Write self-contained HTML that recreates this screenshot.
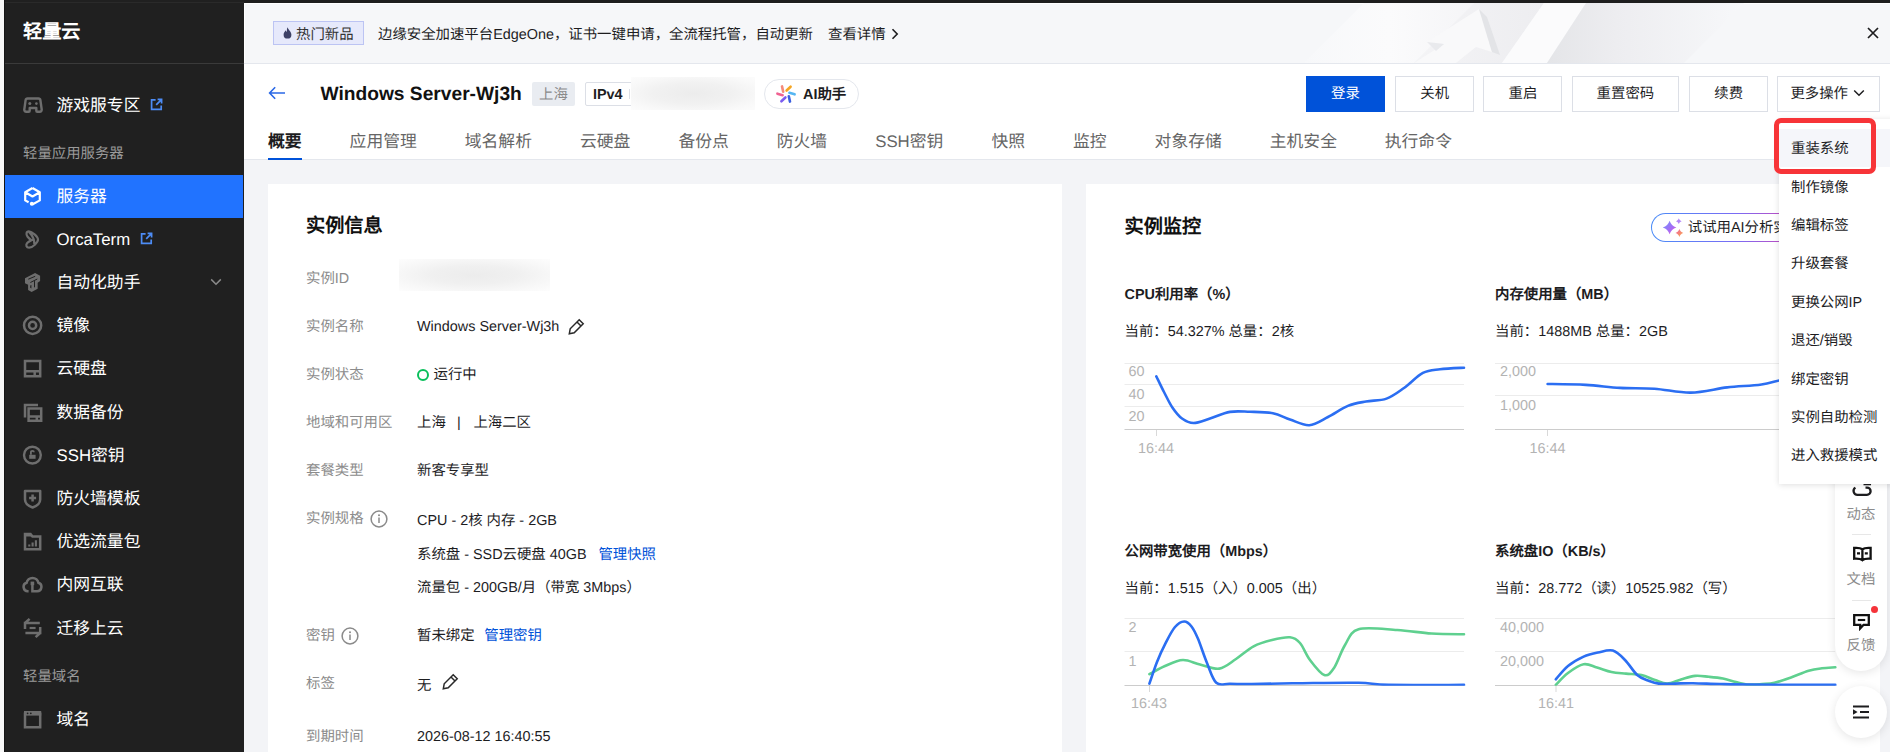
<!DOCTYPE html>
<html lang="zh-CN">
<head>
<meta charset="utf-8">
<title>轻量云</title>
<style>
*{box-sizing:border-box;margin:0;padding:0}
html,body{width:1890px;height:752px;overflow:hidden;background:#f3f4f7}
body{text-rendering:geometricPrecision;font-family:"Liberation Sans",sans-serif;color:#1d1d1f;position:relative;font-size:14px}
.abs{position:absolute}
.t{position:absolute;white-space:nowrap;line-height:1;padding-top:1.2px}
/* sidebar */
#strip{left:0;top:0;width:4px;height:752px;background:#f7f7f7;border-right:0.6px solid #151515;width:4.6px}
#topbar{left:244px;top:0;width:1646px;height:3px;background:#1e1e1e}
#side{left:4px;top:0;width:240px;height:752px;background:#202020}
#side .logo{left:19px;top:22px;font-size:19.2px;font-weight:bold;color:#fff}
#side .sep{left:0;top:63px;width:240px;height:1px;background:#3a3a3a}
#side .mi{left:52.5px;font-size:16.8px;color:#fff}
#side .lbl{left:19px;font-size:14.4px;color:#9a9a9a}
#side .act{left:0;top:175px;width:239px;height:43px;background:#2173ff}
#side svg{position:absolute}
/* banner */
#banner{left:244px;top:3px;width:1646px;height:61px;background:#f6f7f9;border-bottom:1px solid #e4e7ed;box-shadow:inset 1px 1px 0 #fff}
/* title area */
#head{left:244px;top:64px;width:1646px;height:96px;background:#fff;border-bottom:1px solid #e4e7ed}
.tab{font-size:17px;color:#666;top:133px}
.btn{position:absolute;top:12px;height:36px;border:1px solid #dcdfe6;background:#fff;font-size:14px;color:#1d1d1f;text-align:center;line-height:34px;white-space:nowrap;font-size:14.4px}
.panel{position:absolute;background:#fff;top:184px;height:568px}
.k{font-size:14.4px;color:#8c8c8c}
.v{font-size:14.4px;color:#1d1d1f}
.lnk{color:#0052d9}
.ct{font-size:14.4px;font-weight:bold;color:#1d1d1f}
.cs{font-size:14.4px;color:#1d1d1f}
.ax{font-size:14.4px;color:#b3b3b3}
.dd{left:1791px;font-size:14.4px;color:#1d1d1f}
</style>
</head>
<body>
<div id="side" class="abs">
  <div class="t logo">轻量云</div>
  <div class="abs sep"></div>
  <div class="abs" style="left:0;top:2px;width:240px;height:1px;background:#2a2a2a"></div>
  <div class="abs act"></div>
  <div class="t mi" style="top:82.4px;height:43.2px;line-height:43.2px">游戏服专区</div>
  <div class="t mi" style="top:173.4px;height:43.2px;line-height:43.2px">服务器</div>
  <div class="t mi" style="top:216.6px;height:43.2px;line-height:43.2px">OrcaTerm</div>
  <div class="t mi" style="top:259.8px;height:43.2px;line-height:43.2px">自动化助手</div>
  <div class="t mi" style="top:303.0px;height:43.2px;line-height:43.2px">镜像</div>
  <div class="t mi" style="top:346.2px;height:43.2px;line-height:43.2px">云硬盘</div>
  <div class="t mi" style="top:389.4px;height:43.2px;line-height:43.2px">数据备份</div>
  <div class="t mi" style="top:432.6px;height:43.2px;line-height:43.2px">SSH密钥</div>
  <div class="t mi" style="top:475.8px;height:43.2px;line-height:43.2px">防火墙模板</div>
  <div class="t mi" style="top:519.0px;height:43.2px;line-height:43.2px">优选流量包</div>
  <div class="t mi" style="top:562.2px;height:43.2px;line-height:43.2px">内网互联</div>
  <div class="t mi" style="top:605.4px;height:43.2px;line-height:43.2px">迁移上云</div>
  <div class="t mi" style="top:696.4px;height:43.2px;line-height:43.2px">域名</div>
  <div class="t lbl" style="top:131.4px;height:43.2px;line-height:43.2px">轻量应用服务器</div>
  <div class="t lbl" style="top:654.4px;height:43.2px;line-height:43.2px">轻量域名</div>
  <svg style="left:19.0px;top:96.5px" width="20" height="17" viewBox="0 0 20 17"><path d="M4.600 1.500h10.800a2 2 0 0 1 2 1.700l1.300 9.300a2 2 0 0 1-2 2.300h-2.400a1 1 0 0 1-1-1v-2.800H6.700v2.800a1 1 0 0 1-1 1H3.300a2 2 0 0 1-2-2.300l1.300-9.300a2 2 0 0 1 2-1.700z" fill="none" stroke="#6e6e6e" stroke-width="2.400" stroke-linejoin="round"/><circle cx="6.800" cy="6.600" r="1.500" fill="#6e6e6e"/><circle cx="13.400" cy="6.600" r="1.300" fill="#6e6e6e"/></svg>
  <svg style="left:19.0px;top:186.0px" width="19" height="21" viewBox="0 0 19 21"><path d="M9.500 2L16.800 6.200V14.400L9.300 18.500M9.500 2L2.200 6.200V14.400L5.600 16.300M2.200 6.200L9.500 10.500L16.800 6.200" fill="none" stroke="#fff" stroke-width="2.200" stroke-linejoin="round"/><circle cx="8.800" cy="17.800" r="2" fill="#fff"/></svg>
  <svg style="left:20.0px;top:229.0px" width="17" height="21" viewBox="0 0 17 21"><path d="M4.800 2.300C8 2.500 14 7.500 14 10.600C14 13.500 8.500 18.700 5.200 18.700C2.200 18.700 1.600 15.800 3.200 14C4.600 12.500 6.400 11.800 7.600 11.200C6.400 10.600 5 9.600 3.600 7.800C1.800 5.500 2.200 2.300 4.800 2.300ZM5.400 3.400C7.200 5.200 9 8 9.600 10C10 11.500 10.400 12.600 10.200 14.400M7.600 11.200C8.500 11 9.400 10.600 9.600 10" fill="none" stroke="#6e6e6e" stroke-width="2.200" stroke-linecap="round" stroke-linejoin="round"/></svg>
  <svg style="left:20.0px;top:272.0px" width="18" height="21" viewBox="0 0 18 21"><path d="M1 6.200L11.050 1L16.100 3.750V9.100L13.650 10.700V16.700L7.600 20L4.100 18.100V12.700L1 11.200z" fill="#6e6e6e"/><path d="M4.300 7.200L11.200 4.300M6.400 10.500L13.300 7M10.500 9.100V15.300" stroke="#202020" stroke-width="1"/><path d="M6.200 13.600L7.400 13.100V16.400L6.200 15.800z" fill="#202020"/></svg>
  <svg style="left:18.0px;top:315.0px" width="21" height="21" viewBox="0 0 21 21"><circle cx="10.600" cy="10.400" r="8.600" fill="none" stroke="#6e6e6e" stroke-width="2.500"/><circle cx="10.600" cy="10.400" r="3.600" fill="none" stroke="#6e6e6e" stroke-width="2.500"/></svg>
  <svg style="left:19.0px;top:359.0px" width="19" height="19" viewBox="0 0 19 19"><path d="M2 2h15.200v15.200H2zM2 12.200h15.200M11.700 12.200v5" fill="none" stroke="#6e6e6e" stroke-width="2.500"/></svg>
  <svg style="left:18.5px;top:402.5px" width="20" height="20" viewBox="0 0 20 20"><path d="M2 14.500V2h13" fill="none" stroke="#6e6e6e" stroke-width="2.500"/><path d="M5.600 5.600h12.600v12.200H5.600zM5.600 13.400h12.600M13.800 13.400v4.400" fill="none" stroke="#6e6e6e" stroke-width="2.500"/></svg>
  <svg style="left:18.0px;top:444.8px" width="21" height="21" viewBox="0 0 21 21"><circle cx="10.400" cy="10.100" r="8.400" fill="none" stroke="#6e6e6e" stroke-width="2.400"/><path d="M7.200 9.800h6.400v4H7.200z" fill="#6e6e6e"/><path d="M8.900 9.800V7.300a1.500 1.500 0 0 1 3 0" fill="none" stroke="#6e6e6e" stroke-width="1.800"/></svg>
  <svg style="left:19.0px;top:489.0px" width="19" height="20" viewBox="0 0 19 20"><path d="M2 2h15.200v8.500c0 4-3.500 6.500-7.600 8-4.100-1.500-7.600-4-7.600-8z" fill="none" stroke="#6e6e6e" stroke-width="2.500" stroke-linejoin="round"/><path d="M9.600 5.400v7M6.100 8.900h7" stroke="#6e6e6e" stroke-width="2.500"/></svg>
  <svg style="left:19.0px;top:532.0px" width="19" height="19" viewBox="0 0 19 19"><path d="M2 2h5.500l2 2.600h7.700v12.600H2z" fill="none" stroke="#6e6e6e" stroke-width="2.500" stroke-linejoin="miter"/><path d="M2 2h5.500l2 2.600H2z" fill="#6e6e6e"/><path d="M6.300 14.400v-2M9.600 14.400v-4M12.900 14.400v-6.200" stroke="#6e6e6e" stroke-width="2.100"/></svg>
  <svg style="left:18.0px;top:574.0px" width="21" height="20" viewBox="0 0 21 20"><path d="M6.600 17.200H5.800A4.300 4.300 0 0 1 4.600 8.800A6 6 0 0 1 16.400 8.800A4.300 4.300 0 0 1 15.200 17.200H10.400V10.400" fill="none" stroke="#6e6e6e" stroke-width="2.500" stroke-linecap="butt"/><path d="M8.600 7.600h3.600v3.600H8.600z" fill="#6e6e6e"/></svg>
  <svg style="left:19.0px;top:617.0px" width="19" height="22" viewBox="0 0 19 22"><path d="M2 12V6h14.800M2 6L6.600 1.800" fill="none" stroke="#6e6e6e" stroke-width="2.500"/><path d="M17.200 10v6H2.400M17.200 16L12.600 20.200" fill="none" stroke="#6e6e6e" stroke-width="2.500"/><path d="M6.600 11h6" stroke="#6e6e6e" stroke-width="2.200"/></svg>
  <svg style="left:19.0px;top:710.0px" width="19" height="19" viewBox="0 0 19 19"><path d="M2 3.800h15.200v13.400H2z" fill="none" stroke="#6e6e6e" stroke-width="2.500"/><path d="M1 1h17.200v4.600H1z" fill="#6e6e6e"/><circle cx="4.600" cy="3.300" r="0.900" fill="#202020"/><circle cx="7.800" cy="3.300" r="0.900" fill="#202020"/></svg>
  <svg style="left:145.5px;top:98.2px" width="13" height="13" viewBox="0 0 13 13"><path d="M5.600 1.800H1.600v9.600h9.600V7.400" fill="none" stroke="#4d8cf5" stroke-width="1.700"/><path d="M7.600 1.400h4v4M11.400 1.600L6.200 6.800" fill="none" stroke="#4d8cf5" stroke-width="1.700"/></svg>
  <svg style="left:135.5px;top:232.2px" width="13" height="13" viewBox="0 0 13 13"><path d="M5.600 1.800H1.600v9.600h9.600V7.400" fill="none" stroke="#4d8cf5" stroke-width="1.700"/><path d="M7.600 1.400h4v4M11.400 1.600L6.200 6.800" fill="none" stroke="#4d8cf5" stroke-width="1.700"/></svg>
  <svg style="left:205.5px;top:277.5px" width="12" height="8" viewBox="0 0 12 8"><path d="M1.200 1.400L6 6.200L10.800 1.400" fill="none" stroke="#8a8a8a" stroke-width="1.500"/></svg>
</div>
<div id="banner" class="abs">
  <svg class="abs" style="left:0;top:0" width="1646" height="60" viewBox="0 0 1646 60">
    <defs>
      <linearGradient id="bgA" x1="0" y1="0" x2="1" y2="0"><stop offset="0" stop-color="#e4e5e8"/><stop offset="0.35" stop-color="#ededf0"/><stop offset="1" stop-color="#f7f8fa"/></linearGradient>
      <linearGradient id="bgB" x1="0" y1="0" x2="1" y2="0"><stop offset="0" stop-color="#f7f8fa"/><stop offset="0.5" stop-color="#fbfbfc"/><stop offset="1" stop-color="#f5f5f7"/></linearGradient>
      <linearGradient id="bgC" x1="0" y1="0" x2="1" y2="0"><stop offset="0" stop-color="#f4f4f6"/><stop offset="1" stop-color="#ededf0"/></linearGradient>
    </defs>
    <polygon points="1060,60 1120,0 1230,0 1170,60" fill="url(#bgB)"/>
    <polygon points="1170,60 1230,0 1300,0 1258,60" fill="url(#bgC)"/>
    <polygon points="1300,0 1342,0 1303,60 1258,60" fill="#fbfbfc"/>
    <polygon points="1342,0 1500,0 1440,60 1303,60" fill="url(#bgA)"/>
    <polygon points="1235,6 1183,39 1200,41 1170,60 1212,60 1232,44 1248,49" fill="#f9f9fa"/>
    <polygon points="1235,6 1243,14 1256,52 1248,49" fill="#e3e4e7"/>
    <polygon points="1183,39 1200,41 1192,48" fill="#e9eaed"/>
  </svg>
  <div class="abs" style="left:29px;top:18px;width:91px;height:24px;background:#e6e9fb;border:1px solid #bcc4f3"></div>
  <svg class="abs" style="left:39px;top:24px" width="9" height="12" viewBox="0 0 9 12"><path d="M4.6 0.3C5 2.6 8.4 4.6 8.4 7.7a3.9 3.9 0 0 1-7.8 0C0.6 5.6 2 4.6 2.6 3.2c.5 1 .9 1.4 1.4 1.6C3.7 3.2 3.9 1.6 4.6 0.3z" fill="#3d4166"/></svg>
  <div class="t" style="left:52px;top:19px;height:24px;line-height:24px;font-size:14.4px;color:#333">热门新品</div>
  <div class="t" style="left:134px;top:19px;height:24px;line-height:24px;font-size:14.4px;color:#1d1d1f">边缘安全加速平台EdgeOne，证书一键申请，全流程托管，自动更新</div>
  <div class="t" style="left:584px;top:19px;height:24px;line-height:24px;font-size:14.4px;color:#1d1d1f">查看详情</div>
  <svg class="abs" style="left:647.2px;top:24.5px" width="8" height="12" viewBox="0 0 8 12"><path d="M1.5 1.2L6.2 6 1.5 10.8" fill="none" stroke="#1d1d1f" stroke-width="1.6"/></svg>
  <svg class="abs" style="left:1623px;top:24px" width="12" height="12" viewBox="0 0 12 12"><path d="M1 1L11 11M11 1L1 11" fill="none" stroke="#1d1d1f" stroke-width="1.7"/></svg>
</div>
<div id="head" class="abs">
  <svg class="abs" style="left:24px;top:22px" width="18" height="14" viewBox="0 0 18 14"><path d="M7.2 1.2L1.6 7l5.6 5.8M1.8 7H17" fill="none" stroke="#2a68e6" stroke-width="1.6"/></svg>
  <div class="t" style="left:76.5px;top:14.7px;height:30px;line-height:30px;font-size:19.2px;font-weight:bold;color:#111">Windows Server-Wj3h</div>
  <div class="t" style="left:288px;top:18px;width:43px;height:24px;line-height:24px;background:#e9ecf1;border-radius:2px;text-align:center;font-size:14.4px;color:#8a8a8a">上海</div>
  <div class="abs" style="left:341px;top:18px;width:170px;height:24px;border:1px solid #dcdfe6;border-radius:2px"></div>
  <div class="t" style="left:349px;top:18px;height:24px;line-height:25px;font-size:14.4px;font-weight:bold;color:#1d1d1f">IPv4</div>
  <div class="abs" style="left:385px;top:25px;width:1px;height:10px;background:#dcdfe6"></div>
  <div class="abs" style="left:386.5px;top:12.7px;width:124.7px;height:33.3px;background:radial-gradient(ellipse at 50% 50%,#ececec 0%,#f1f1f1 45%,#f9f9f9 80%,#fcfcfc 100%)"></div>
  <div class="abs" style="left:520px;top:15px;width:95px;height:30px;border:1px solid #e4e7ed;border-radius:15px;background:#fff"></div>
  <svg class="abs" style="left:530.7px;top:18.8px" width="22" height="22" viewBox="0 0 22 22"><path d="M11.6 7.5L15.6 3.7" stroke="#f5a623" stroke-width="2.600" stroke-linecap="round"/><path d="M14.4 9.8L19.6 11.3" stroke="#55b6f2" stroke-width="2.600" stroke-linecap="round"/><path d="M13.8 13.3L15.0 18.6" stroke="#3b5fe0" stroke-width="2.600" stroke-linecap="round"/><path d="M10.4 14.5L6.4 18.3" stroke="#7b5cf0" stroke-width="2.600" stroke-linecap="round"/><path d="M7.6 12.2L2.4 10.7" stroke="#f06292" stroke-width="2.600" stroke-linecap="round"/><path d="M8.2 8.7L7.0 3.4" stroke="#f58a7a" stroke-width="2.600" stroke-linecap="round"/></svg>
  <div class="t" style="left:559px;top:15px;height:30px;line-height:30px;font-size:14.4px;font-weight:bold;color:#1d1d1f">AI助手</div>
  <div class="btn" style="left:1062.0px;width:79px;background:#0052d9;border-color:#0052d9;color:#fff;">登录</div>
  <div class="btn" style="left:1151.2px;width:79px;">关机</div>
  <div class="btn" style="left:1239.4px;width:79px;">重启</div>
  <div class="btn" style="left:1328.0px;width:106.8px;">重置密码</div>
  <div class="btn" style="left:1445.2px;width:79px;">续费</div>
  <div class="btn" style="left:1533.4px;width:102.6px;text-align:left;padding-left:12px">更多操作</div>
  <svg class="abs" style="left:1609px;top:25px" width="12" height="8" viewBox="0 0 12 8"><path d="M1.2 1.5L6 6.2 10.8 1.5" fill="none" stroke="#1d1d1f" stroke-width="1.5"/></svg>
  <div class="t" style="left:24.0px;top:62px;height:30px;line-height:30px;font-size:16.8px;color:#1d1d1f;font-weight:bold">概要</div>
  <div class="t" style="left:105.6px;top:62px;height:30px;line-height:30px;font-size:16.8px;color:#666">应用管理</div>
  <div class="t" style="left:220.8px;top:62px;height:30px;line-height:30px;font-size:16.8px;color:#666">域名解析</div>
  <div class="t" style="left:336.0px;top:62px;height:30px;line-height:30px;font-size:16.8px;color:#666">云硬盘</div>
  <div class="t" style="left:434.4px;top:62px;height:30px;line-height:30px;font-size:16.8px;color:#666">备份点</div>
  <div class="t" style="left:532.8px;top:62px;height:30px;line-height:30px;font-size:16.8px;color:#666">防火墙</div>
  <div class="t" style="left:631.2px;top:62px;height:30px;line-height:30px;font-size:16.8px;color:#666">SSH密钥</div>
  <div class="t" style="left:747.4px;top:62px;height:30px;line-height:30px;font-size:16.8px;color:#666">快照</div>
  <div class="t" style="left:829.0px;top:62px;height:30px;line-height:30px;font-size:16.8px;color:#666">监控</div>
  <div class="t" style="left:910.6px;top:62px;height:30px;line-height:30px;font-size:16.8px;color:#666">对象存储</div>
  <div class="t" style="left:1025.8px;top:62px;height:30px;line-height:30px;font-size:16.8px;color:#666">主机安全</div>
  <div class="t" style="left:1140.8px;top:62px;height:30px;line-height:30px;font-size:16.8px;color:#666">执行命令</div>
  <div class="abs" style="left:24px;top:94px;width:34px;height:2px;background:#0052d9"></div>
</div>
<div id="strip" class="abs"></div>
<div id="topbar" class="abs"></div>
<div class="panel" style="left:268px;width:794px"></div>
<div class="panel" style="left:1086px;width:794px"></div>
<div id="pl">
<div class="t" style="left:306px;top:211px;height:30px;line-height:30px;font-size:19.2px;font-weight:bold;color:#111">实例信息</div>
<div class="t k" style="left:306px;top:266.0px;height:24px;line-height:24px;">实例ID</div>
<div class="t k" style="left:306px;top:314.2px;height:24px;line-height:24px;">实例名称</div>
<div class="t k" style="left:306px;top:362.0px;height:24px;line-height:24px;">实例状态</div>
<div class="t k" style="left:306px;top:409.8px;height:24px;line-height:24px;">地域和可用区</div>
<div class="t k" style="left:306px;top:457.6px;height:24px;line-height:24px;">套餐类型</div>
<div class="t k" style="left:306px;top:506.0px;height:24px;line-height:24px;">实例规格</div>
<div class="t k" style="left:306px;top:623.3px;height:24px;line-height:24px;">密钥</div>
<div class="t k" style="left:306px;top:670.6px;height:24px;line-height:24px;">标签</div>
<div class="t k" style="left:306px;top:724.0px;height:24px;line-height:24px;">到期时间</div>
<div class="abs" style="left:399px;top:259px;width:151px;height:32px;background:radial-gradient(ellipse at 50% 50%,#ececec 0%,#f0f0f0 40%,#f8f8f8 75%,#fdfdfd 100%)"></div>
<div class="t v" style="left:417px;top:314.2px;height:24px;line-height:24px;">Windows Server-Wj3h</div>
<svg class="abs" style="left:567.5px;top:318px" width="17" height="17" viewBox="0 0 17 17"><path d="M11.2 1.800l4 4L6.200 14.800L1.300 15.700L2.200 10.800zM9 4l4 4" fill="none" stroke="#2a2a2a" stroke-width="1.500" stroke-linejoin="miter"/></svg>
<div class="abs" style="left:417px;top:368.5px;width:12px;height:12px;border:2px solid #0abf5b;border-radius:50%"></div>
<div class="t v" style="left:433.5px;top:362.0px;height:24px;line-height:24px;">运行中</div>
<div class="t v" style="left:417px;top:409.8px;height:24px;line-height:24px;">上海</div>
<div class="t v" style="left:457px;top:409.8px;height:24px;line-height:24px;">|</div>
<div class="t v" style="left:473.4px;top:409.8px;height:24px;line-height:24px;">上海二区</div>
<div class="t v" style="left:417px;top:457.6px;height:24px;line-height:24px;">新客专享型</div>
<svg class="abs" style="left:369.5px;top:509.5px" width="18" height="18" viewBox="0 0 18 18"><circle cx="9" cy="9" r="7.9" fill="none" stroke="#8a8a8a" stroke-width="1.5"/><path d="M9 7.6v5.4" stroke="#8a8a8a" stroke-width="1.5"/><circle cx="9" cy="5.3" r="1" fill="#8a8a8a"/></svg>
<div class="t v" style="left:417px;top:507.8px;height:24px;line-height:24px;">CPU - 2核 内存 - 2GB</div>
<div class="t v" style="left:417px;top:542.0px;height:24px;line-height:24px;">系统盘 - SSD云硬盘 40GB</div>
<div class="t v lnk" style="left:598.4px;top:542.0px;height:24px;line-height:24px;">管理快照</div>
<div class="t v" style="left:417px;top:575.0px;height:24px;line-height:24px;">流量包 - 200GB/月（带宽 3Mbps）</div>
<svg class="abs" style="left:340.5px;top:627px" width="18" height="18" viewBox="0 0 18 18"><circle cx="9" cy="9" r="7.9" fill="none" stroke="#8a8a8a" stroke-width="1.5"/><path d="M9 7.6v5.4" stroke="#8a8a8a" stroke-width="1.5"/><circle cx="9" cy="5.3" r="1" fill="#8a8a8a"/></svg>
<div class="t v" style="left:417px;top:623.3px;height:24px;line-height:24px;">暂未绑定</div>
<div class="t v lnk" style="left:484.3px;top:623.3px;height:24px;line-height:24px;">管理密钥</div>
<div class="t v" style="left:417px;top:672.5px;height:24px;line-height:24px;">无</div>
<svg class="abs" style="left:442px;top:672.7px" width="17" height="17" viewBox="0 0 17 17"><path d="M11.2 1.800l4 4L6.200 14.800L1.300 15.700L2.200 10.800zM9 4l4 4" fill="none" stroke="#2a2a2a" stroke-width="1.500" stroke-linejoin="miter"/></svg>
<div class="t v" style="left:417px;top:724.0px;height:24px;line-height:24px;">2026-08-12 16:40:55</div>
</div>
<div id="pr">
<div class="t" style="left:1124.5px;top:211.5px;height:30px;line-height:30px;font-size:19.2px;font-weight:bold;color:#111">实例监控</div>
<div class="abs" style="left:1651px;top:212.6px;width:170px;height:29.4px;border-radius:14.7px;background:linear-gradient(90deg,#4a8cf7 0%,#7a6cf5 50%,#c04cc0 80%,#e05090 100%);"></div>
<div class="abs" style="left:1652.1px;top:213.7px;width:167.8px;height:27.2px;border-radius:13.6px;background:#fff"></div>
<svg class="abs" style="left:1660px;top:215px" width="26" height="25" viewBox="0 0 26 25"><defs><linearGradient id="sg1" x1="0" y1="0" x2="1" y2="1"><stop offset="0" stop-color="#6f95fb"/><stop offset="0.6" stop-color="#a76bf5"/><stop offset="1" stop-color="#e860c8"/></linearGradient><linearGradient id="sg2" x1="0" y1="0" x2="1" y2="1"><stop offset="0" stop-color="#f05aa8"/><stop offset="1" stop-color="#fbb040"/></linearGradient></defs><path d="M9.6 5.7C10.69 9.10 13.00 11.41 16.40 12.50C13.00 13.59 10.69 15.90 9.60 19.30C8.51 15.90 6.20 13.59 2.80 12.50C6.20 11.41 8.51 9.10 9.60 5.70Z" fill="url(#sg1)"/><path d="M18.8 3.3000000000000003C19.26 4.75 20.25 5.74 21.70 6.20C20.25 6.66 19.26 7.65 18.80 9.10C18.34 7.65 17.35 6.66 15.90 6.20C17.35 5.74 18.34 4.75 18.80 3.30Z" fill="#b487f8"/><path d="M19.4 14.1C20.02 16.05 21.35 17.38 23.30 18.00C21.35 18.62 20.02 19.95 19.40 21.90C18.78 19.95 17.45 18.62 15.50 18.00C17.45 17.38 18.78 16.05 19.40 14.10Z" fill="url(#sg2)"/></svg>
<div class="t cs" style="left:1687.8px;top:215.3px;height:24px;line-height:24px;">试试用AI分析实例</div>
<div class="t ct" style="left:1124.5px;top:282.0px;height:24px;line-height:24px;">CPU利用率（%）</div>
<div class="t cs" style="left:1124.5px;top:319.0px;height:24px;line-height:24px;">当前：54.327% 总量：2核</div>
<div class="t ct" style="left:1495px;top:282.0px;height:24px;line-height:24px;">内存使用量（MB）</div>
<div class="t cs" style="left:1495px;top:319.0px;height:24px;line-height:24px;">当前：1488MB 总量：2GB</div>
<div class="t ct" style="left:1124.5px;top:539.2px;height:24px;line-height:24px;">公网带宽使用（Mbps）</div>
<div class="t cs" style="left:1124.5px;top:576.0px;height:24px;line-height:24px;">当前：1.515（入）0.005（出）</div>
<div class="t ct" style="left:1495px;top:539.2px;height:24px;line-height:24px;">系统盘IO（KB/s）</div>
<div class="t cs" style="left:1495px;top:576.0px;height:24px;line-height:24px;">当前：28.772（读）10525.982（写）</div>
<svg class="abs" style="left:0;top:0" width="1890" height="752" viewBox="0 0 1890 752">
<defs><clipPath id="cpT"><rect x="1100" y="340" width="760" height="90"/></clipPath><clipPath id="cpB"><rect x="1100" y="600" width="760" height="85.800"/></clipPath></defs>
<path d="M1124.5 363.5H1464" stroke="#ececec" stroke-width="1"/>
<path d="M1124.5 384.5H1464" stroke="#ececec" stroke-width="1"/>
<path d="M1124.5 406.5H1464" stroke="#ececec" stroke-width="1"/>
<path d="M1124.5 429.5H1464" stroke="#cccccc" stroke-width="1.2"/>
<path d="M1156.5 430V436" stroke="#d9d9d9"/>
<path d="M1156.3 376.3C1157.6 378.9 1161.3 386.9 1164.0 392.0C1166.7 397.1 1169.2 402.8 1172.2 407.2C1175.2 411.6 1178.4 415.9 1182.0 418.5C1185.6 421.1 1188.9 423.0 1193.6 423.0C1198.3 423.0 1203.9 420.4 1210.0 418.5C1216.1 416.6 1223.3 413.0 1230.0 411.9C1236.7 410.8 1242.8 411.6 1250.0 411.8C1257.2 412.0 1266.2 411.9 1272.9 413.2C1279.6 414.5 1283.9 417.5 1290.0 419.5C1296.1 421.5 1303.0 425.6 1309.3 425.2C1315.6 424.8 1321.6 420.2 1328.0 417.0C1334.4 413.8 1341.6 408.5 1347.9 405.9C1354.2 403.3 1359.6 402.7 1366.0 401.5C1372.4 400.3 1380.2 400.9 1386.5 398.6C1392.8 396.4 1397.9 392.3 1404.0 388.0C1410.1 383.7 1416.9 376.0 1422.9 372.9C1428.9 369.8 1433.2 370.1 1440.0 369.2C1446.8 368.3 1460.0 367.9 1464.0 367.7" clip-path="url(#cpT)" fill="none" stroke="#2b6ef2" stroke-width="2.6" stroke-linecap="round"/>
<path d="M1495 363.5H1835" stroke="#ececec" stroke-width="1"/>
<path d="M1495 395.5H1835" stroke="#ececec" stroke-width="1"/>
<path d="M1495 429.5H1835" stroke="#cccccc" stroke-width="1.2"/>
<path d="M1547.5 430V436" stroke="#d9d9d9"/>
<path d="M1547.6 384.0C1554.0 384.1 1573.7 384.2 1585.8 384.9C1597.9 385.5 1608.6 387.3 1620.0 387.9C1631.4 388.5 1642.6 387.9 1654.4 388.7C1666.2 389.5 1678.7 392.8 1690.8 392.6C1702.9 392.4 1715.4 388.8 1727.2 387.4C1739.0 386.0 1751.0 386.0 1761.5 384.5C1772.0 383.0 1777.8 379.8 1790.0 378.5C1802.2 377.2 1827.5 377.2 1835.0 377.0" clip-path="url(#cpT)" fill="none" stroke="#2b6ef2" stroke-width="2.6" stroke-linecap="round"/>
<path d="M1124.5 618.5H1464" stroke="#ececec" stroke-width="1"/>
<path d="M1124.5 651.5H1464" stroke="#ececec" stroke-width="1"/>
<path d="M1124.5 685.5H1464" stroke="#cccccc" stroke-width="1.2"/>
<path d="M1149.5 686V692" stroke="#d9d9d9"/>
<path d="M1149.4 674.2C1152.0 672.8 1159.4 668.4 1165.0 666.0C1170.6 663.6 1177.1 660.2 1182.9 660.0C1188.7 659.8 1193.9 663.1 1200.0 664.5C1206.1 665.9 1213.3 669.5 1219.3 668.6C1225.3 667.7 1230.3 662.7 1236.0 659.0C1241.7 655.3 1247.6 649.5 1253.6 646.3C1259.6 643.1 1265.9 641.5 1272.0 640.0C1278.1 638.5 1285.3 636.8 1290.0 637.3C1294.7 637.8 1296.7 639.2 1300.0 643.0C1303.3 646.8 1306.0 654.7 1310.0 660.0C1314.0 665.3 1320.3 673.7 1324.3 675.0C1328.3 676.3 1330.5 673.0 1334.0 668.0C1337.5 663.0 1340.9 651.5 1345.0 645.0C1349.1 638.5 1349.9 631.7 1358.6 629.2C1367.3 626.7 1385.0 629.3 1397.2 630.0C1409.4 630.7 1420.4 632.8 1431.5 633.5C1442.6 634.2 1458.6 634.2 1464.0 634.3" clip-path="url(#cpB)" fill="none" stroke="#5fd08f" stroke-width="2.6" stroke-linecap="round"/>
<path d="M1149.4 683.6C1150.7 680.0 1154.3 668.8 1157.0 662.0C1159.7 655.2 1162.7 648.7 1165.7 642.9C1168.7 637.1 1171.9 630.6 1175.0 627.0C1178.1 623.4 1181.5 621.6 1184.2 621.5C1187.0 621.4 1189.2 623.6 1191.5 626.5C1193.8 629.4 1195.3 632.5 1197.9 638.6C1200.5 644.7 1203.9 655.6 1207.0 663.0C1210.1 670.4 1212.5 679.3 1216.3 682.8C1220.1 686.3 1224.1 683.6 1230.0 683.8C1235.9 684.0 1239.8 684.1 1251.5 684.0C1263.2 683.9 1282.2 683.4 1300.0 683.2C1317.8 683.0 1343.8 682.5 1358.6 682.8C1373.4 683.1 1371.0 684.5 1388.6 684.9C1406.2 685.2 1451.4 684.9 1464.0 684.9" clip-path="url(#cpB)" fill="none" stroke="#2b6ef2" stroke-width="2.6" stroke-linecap="round"/>
<path d="M1495 618.5H1835" stroke="#ececec" stroke-width="1"/>
<path d="M1495 651.5H1835" stroke="#ececec" stroke-width="1"/>
<path d="M1495 685.5H1835" stroke="#cccccc" stroke-width="1.2"/>
<path d="M1556 686V692" stroke="#d9d9d9"/>
<path d="M1555.8 684.9C1557.8 682.9 1563.4 676.4 1568.0 673.0C1572.6 669.6 1578.8 665.2 1583.6 664.3C1588.4 663.4 1592.3 666.2 1597.0 667.5C1601.7 668.8 1606.7 671.0 1611.5 672.0C1616.3 673.0 1621.0 673.1 1626.0 673.6C1631.0 674.1 1636.7 673.9 1641.5 675.0C1646.3 676.1 1650.7 678.6 1655.0 680.0C1659.3 681.4 1662.9 683.7 1667.2 683.6C1671.5 683.5 1676.3 680.8 1681.0 679.5C1685.7 678.2 1690.4 676.4 1695.1 675.9C1699.8 675.4 1704.4 676.4 1709.0 676.8C1713.6 677.2 1718.4 677.6 1722.9 678.5C1727.4 679.4 1731.7 681.0 1736.0 682.0C1740.3 683.0 1744.4 684.2 1748.7 684.5C1753.0 684.8 1757.7 684.3 1762.0 684.0C1766.3 683.7 1769.6 683.9 1774.4 682.8C1779.2 681.7 1785.3 679.5 1791.0 677.5C1796.7 675.5 1803.5 672.3 1808.7 670.8C1813.9 669.3 1817.6 668.9 1822.0 668.3C1826.4 667.7 1833.1 667.5 1835.3 667.3" clip-path="url(#cpB)" fill="none" stroke="#5fd08f" stroke-width="2.6" stroke-linecap="round"/>
<path d="M1555.8 679.3C1557.8 677.1 1563.4 669.8 1568.0 666.0C1572.6 662.2 1578.6 658.9 1583.6 656.6C1588.6 654.4 1593.1 653.5 1598.0 652.5C1602.9 651.5 1608.3 649.4 1612.8 650.6C1617.3 651.9 1620.9 655.9 1625.0 660.0C1629.1 664.1 1633.4 671.6 1637.2 675.0C1641.0 678.4 1644.4 679.1 1648.0 680.5C1651.6 681.9 1654.2 683.1 1658.7 683.6C1663.2 684.1 1669.3 683.7 1675.0 683.6C1680.7 683.5 1685.5 683.1 1693.0 683.2C1700.5 683.3 1710.7 683.8 1720.0 684.0C1729.3 684.2 1737.0 684.4 1748.7 684.5C1760.4 684.6 1775.6 684.7 1790.0 684.8C1804.4 684.9 1827.8 684.9 1835.3 684.9" clip-path="url(#cpB)" fill="none" stroke="#2b6ef2" stroke-width="2.6" stroke-linecap="round"/>
</svg>
<div class="t ax" style="left:1128.4px;top:361.2px;height:20px;line-height:20px;">60</div>
<div class="t ax" style="left:1128.4px;top:384.3px;height:20px;line-height:20px;">40</div>
<div class="t ax" style="left:1128.4px;top:406.2px;height:20px;line-height:20px;">20</div>
<div class="t ax" style="left:1138px;top:437.5px;height:20px;line-height:20px;">16:44</div>
<div class="t ax" style="left:1500px;top:361.2px;height:20px;line-height:20px;">2,000</div>
<div class="t ax" style="left:1500px;top:395.0px;height:20px;line-height:20px;">1,000</div>
<div class="t ax" style="left:1529.5px;top:437.5px;height:20px;line-height:20px;">16:44</div>
<div class="t ax" style="left:1128.4px;top:617.0px;height:20px;line-height:20px;">2</div>
<div class="t ax" style="left:1128.4px;top:651.0px;height:20px;line-height:20px;">1</div>
<div class="t ax" style="left:1131px;top:693.1px;height:20px;line-height:20px;">16:43</div>
<div class="t ax" style="left:1500px;top:617.0px;height:20px;line-height:20px;">40,000</div>
<div class="t ax" style="left:1500px;top:651.0px;height:20px;line-height:20px;">20,000</div>
<div class="t ax" style="left:1538px;top:693.1px;height:20px;line-height:20px;">16:41</div>
</div>
<div id="float">
<div class="abs" style="left:1835px;top:440px;width:52px;height:230.5px;border-radius:26px;background:#fff;box-shadow:0 2px 10px rgba(0,0,0,0.10)"></div>
<div class="abs" style="left:1835px;top:686px;width:52px;height:52px;border-radius:26px;background:#fff;box-shadow:0 2px 10px rgba(0,0,0,0.10)"></div>
<svg class="abs" style="left:1851px;top:478px" width="22" height="20" viewBox="0 0 22 20"><path d="M14.500 9.600H16A3.600 3.600 0 0 1 16 16.800H6.400A3.900 3.900 0 0 1 4.400 9.600" fill="none" stroke="#1d1d1f" stroke-width="2.300"/><path d="M12.500 6.300h7.500" fill="none" stroke="#1d1d1f" stroke-width="2"/><path d="M16.600 2.800l3.400 3.500" fill="none" stroke="#1d1d1f" stroke-width="2"/></svg>
<div class="t" style="left:1846.5px;top:503.5px;height:20px;line-height:20px;font-size:14.4px;color:#8c8c8c">动态</div>
<div class="abs" style="left:1851.5px;top:533.8px;width:19px;height:1px;background:#e7e7e7"></div>
<svg class="abs" style="left:1851.5px;top:545.5px" width="21" height="17" viewBox="0 0 21 17"><path d="M10.400 3.200C8.600 1.900 5.200 1.700 2.200 1.900v10.800c3-.2 6.400 0 8.200 1.500 1.800-1.500 5.200-1.700 8.200-1.500V1.900C15.600 1.700 12.200 1.900 10.400 3.200zV14" fill="none" stroke="#111" stroke-width="2.300" stroke-linejoin="miter"/><path d="M5 7.300h3M12.800 7.300h3" stroke="#111" stroke-width="2.300"/></svg>
<div class="t" style="left:1846.5px;top:569px;height:20px;line-height:20px;font-size:14.4px;color:#8c8c8c">文档</div>
<div class="abs" style="left:1851.5px;top:600px;width:19px;height:1px;background:#e7e7e7"></div>
<svg class="abs" style="left:1852.3px;top:612.5px" width="19" height="18" viewBox="0 0 19 18"><path d="M2.200 2.200h14.600v9.600h-5.200l-3.400 3.600v-3.600H2.200z" fill="none" stroke="#111" stroke-width="2.300" stroke-linejoin="miter"/><path d="M5.800 7h7.400" stroke="#111" stroke-width="2.100"/></svg>
<div class="abs" style="left:1870.7px;top:606px;width:7px;height:7px;border-radius:50%;background:#f5333a"></div>
<div class="t" style="left:1846.5px;top:635px;height:20px;line-height:20px;font-size:14.4px;color:#8c8c8c">反馈</div>
<svg class="abs" style="left:1852px;top:705px" width="18" height="14" viewBox="0 0 18 14"><path d="M1 1.500h16M8 7h9M1 12.500h16" stroke="#1d1d1f" stroke-width="1.800"/><path d="M1 4.200L5.600 7 1 9.800z" fill="#1d1d1f"/></svg>
</div>
<div id="dd">
<div class="abs" style="left:1779px;top:119px;width:130px;height:365px;background:#fff;box-shadow:0 1px 6px rgba(0,0,0,0.13)"></div>
<div class="abs" style="left:1779px;top:128.8px;width:111px;height:38.4px;background:#f5f6fa"></div>
<div class="t dd" style="top:136.0px;height:24px;line-height:24px">重装系统</div>
<div class="t dd" style="top:174.4px;height:24px;line-height:24px">制作镜像</div>
<div class="t dd" style="top:212.8px;height:24px;line-height:24px">编辑标签</div>
<div class="t dd" style="top:251.2px;height:24px;line-height:24px">升级套餐</div>
<div class="t dd" style="top:289.6px;height:24px;line-height:24px">更换公网IP</div>
<div class="t dd" style="top:328.0px;height:24px;line-height:24px">退还/销毁</div>
<div class="t dd" style="top:366.4px;height:24px;line-height:24px">绑定密钥</div>
<div class="t dd" style="top:404.8px;height:24px;line-height:24px">实例自助检测</div>
<div class="t dd" style="top:443.2px;height:24px;line-height:24px">进入救援模式</div>
<div class="abs" style="left:1774.2px;top:118.3px;width:101.8px;height:55.6px;border:5.8px solid #f73438;border-radius:7px"></div>
</div>

</body>
</html>
